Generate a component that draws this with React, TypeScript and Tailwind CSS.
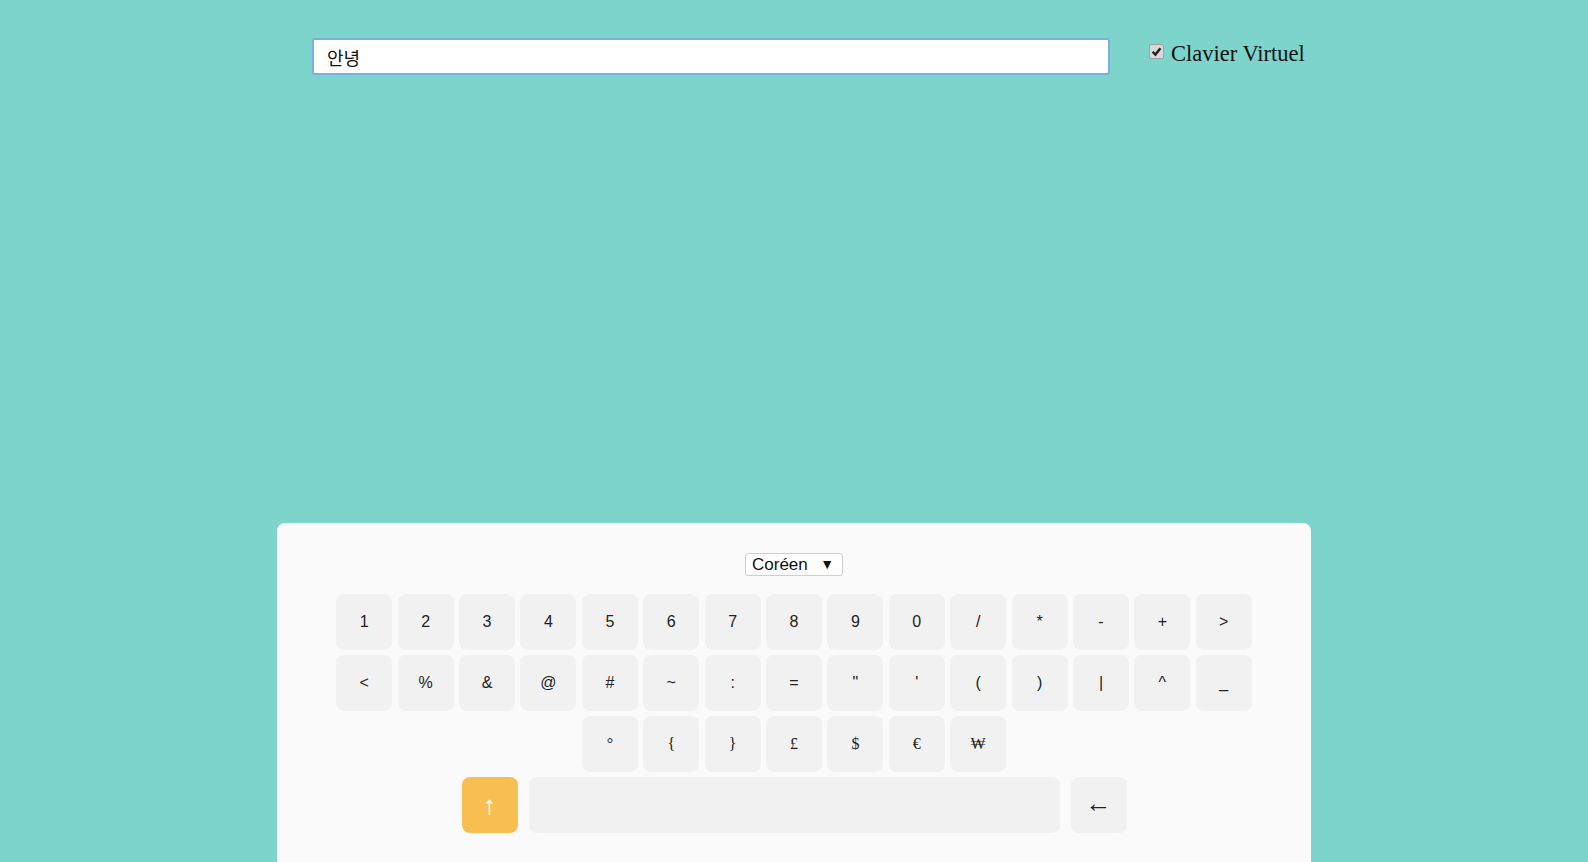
import React, { useState } from 'react';

const row1 = ['1', '2', '3', '4', '5', '6', '7', '8', '9', '0', '/', '*', '-', '+', '>'];
const row2 = ['<', '%', '&', '@', '#', '~', ':', '=', '"', "'", '(', ')', '|', '^', '_'];
const row3 = ['°', '{', '}', '£', '$', '€', '₩'];

function Key({ label, serif }: { label: string; serif?: boolean }) {
  return (
    <button
      className={`w-[56px] h-[56px] rounded-lg bg-[#f1f1f1] text-[#222] text-[16px] flex items-center justify-center ${
        serif ? "font-['Liberation_Serif',serif]" : "font-['Liberation_Sans',Arial,sans-serif]"
      }`}
    >
      {label}
    </button>
  );
}

export default function App() {
  const [text] = useState('안녕');
  const [showKeyboard] = useState(true);

  return (
    <div className="h-[862px] overflow-hidden bg-[#7cd4ca] flex flex-col items-center">
      {/* Top bar */}
      <div className="w-[1034px] h-[75px] shrink-0 pl-[35px] pt-[38px] flex items-start">
        <input
          value={text}
          readOnly
          className="w-[798px] h-[37px] bg-white border-2 border-[#7aaee4] rounded-[3px] px-[13px] text-[18px] text-[#111] outline-none font-['Liberation_Sans','Noto_Sans_CJK_KR',sans-serif]"
        />
        <label className="ml-[39px] mt-[1px] h-[30px] flex items-center font-['Liberation_Serif',serif] text-[22.5px] leading-[30px] text-[#111]">
          <span className="w-[15px] h-[15px] mr-[7px] -mt-[6px] rounded-[2px] bg-[#d9d9d9] border border-[#a0a0a0] flex items-center justify-center">
            {showKeyboard && (
              <svg width="11" height="11" viewBox="0 0 10 10">
                <path d="M1.5 5.2 L4 7.8 L8.6 2" stroke="#222" strokeWidth="2.2" fill="none" />
              </svg>
            )}
          </span>
          Clavier Virtuel
        </label>
      </div>

      {/* Keyboard panel */}
      {showKeyboard && (
        <div className="mt-[448px] w-[1034px] h-[360px] shrink-0 bg-[#fafafa] rounded-lg pt-[30px] flex flex-col items-center">
          <div className="w-[98px] h-[23px] border border-[#cfcfcf] rounded-[3px] bg-white flex items-center justify-between pl-[6px] pr-[8px] text-[17px] text-[#111] font-['Liberation_Sans',Arial,sans-serif]">
            <span>Coréen</span>
            <span className="text-[14px]">▼</span>
          </div>

          <div className="mt-[18px] flex flex-col items-center gap-[5px]">
            <div className="flex gap-[5.4px]">
              {row1.map((k) => (
                <Key key={k} label={k} />
              ))}
            </div>
            <div className="flex gap-[5.4px]">
              {row2.map((k) => (
                <Key key={k} label={k} />
              ))}
            </div>
            <div className="flex gap-[5.4px]">
              {row3.map((k) => (
                <Key key={k} label={k} serif />
              ))}
            </div>
            <div className="flex gap-[11px]">
              <button className="w-[56px] h-[56px] rounded-lg bg-[#f7bf52] text-white text-[26px] flex items-center justify-center font-['Liberation_Sans',Arial,sans-serif]">
                ↑
              </button>
              <button className="w-[531px] h-[56px] rounded-lg bg-[#f1f1f1]" />
              <button className="w-[56px] h-[56px] rounded-lg bg-[#f1f1f1] text-[#222] text-[26px] pb-[3px] flex items-center justify-center font-['Liberation_Sans',Arial,sans-serif]">
                ←
              </button>
            </div>
          </div>
        </div>
      )}
    </div>
  );
}
